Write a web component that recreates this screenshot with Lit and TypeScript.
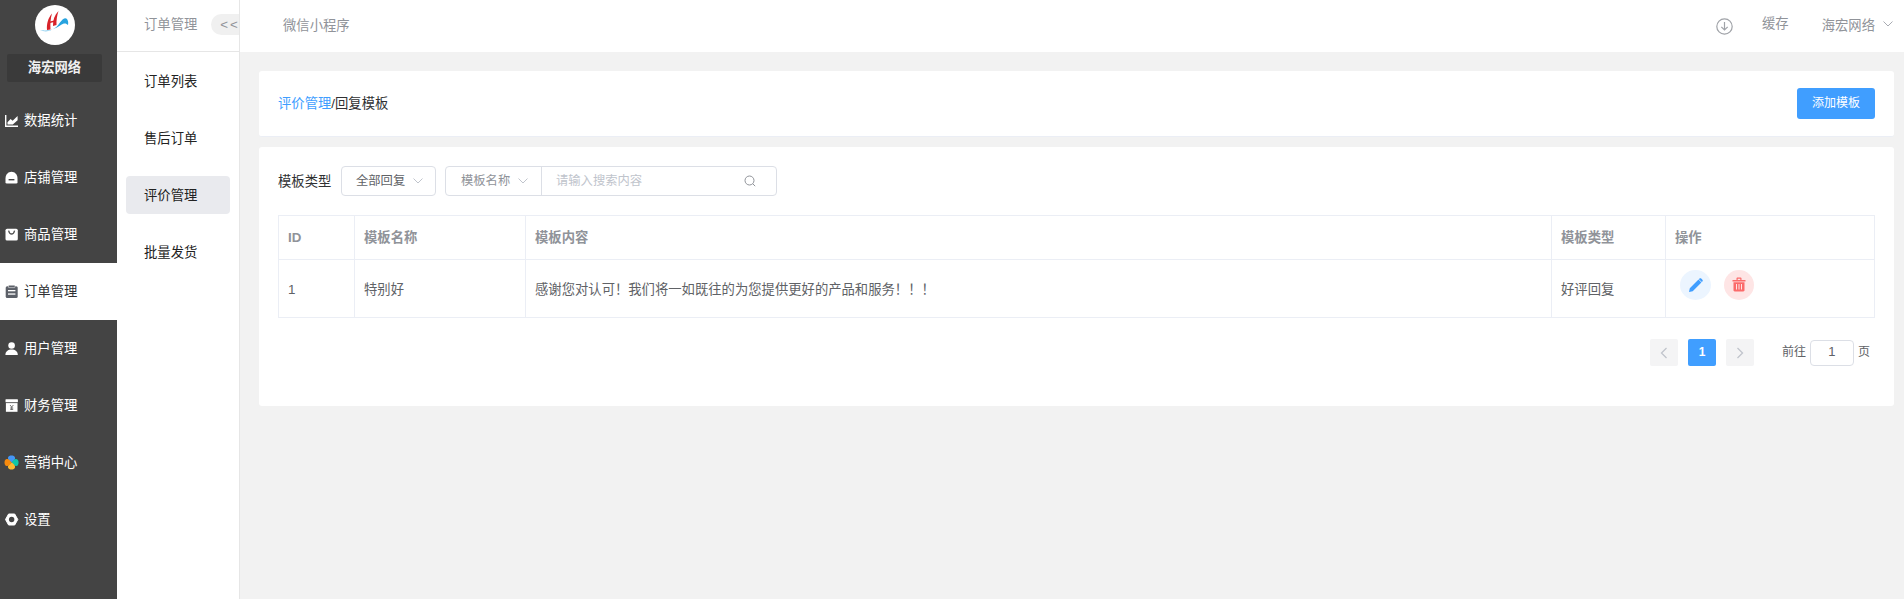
import { LitElement, html, css, svg } from "lit";
import { customElement } from "lit/decorators.js";

const petal = "M6.500 6.500C4.500 5.300 3 3.700 3.200 2.100 3.400 .5 5 0 6.500 0s3.100.5 3.300 2.100C10 3.700 8.500 5.300 6.500 6.500z";

const icons: Record<string, unknown> = {
  chart: svg`<path d="M.7 1v11.300H13" fill="none" stroke="#fff" stroke-width="1.400"/><path d="M2.500 10.500V8.200L5.600 5l2 1.800L12.600 2v4.200L7.800 10.500z" fill="#fff"/>`,
  store: svg`<path d="M.5 11.200V7.400C.5 3.600 3.200 .8 6.500 .8s6 2.800 6 6.600v3.800a1.300 1.300 0 0 1-1.300 1.300H1.800A1.300 1.300 0 0 1 .5 11.200z" fill="#fff"/><rect x="3.600" y="8" width="5.800" height="1.400" fill="#444"/>`,
  goods: svg`<rect x=".5" y=".7" width="12.300" height="11.800" rx="1.600" fill="#fff"/><path d="M3.600 2.600c.6 2.400 1.700 3.400 3 3.400s2.400-1 3-3.400" fill="none" stroke="#555" stroke-width="1.300"/>`,
  order: svg`<rect x=".7" y="1.300" width="12" height="11.700" rx="1.500" fill="#5c6068"/><rect x="3.400" y=".2" width="6.600" height="2.400" rx=".6" fill="#5c6068" stroke="#fff" stroke-width=".5"/><rect x="3" y="5" width="7.400" height="1.300" fill="#fff"/><rect x="3" y="8.400" width="7.400" height="1.300" fill="#fff"/>`,
  user: svg`<circle cx="6.600" cy="3.500" r="3.300" fill="#fff"/><path d="M.4 13c0-3.400 2.600-5.400 6.200-5.400s6.200 2 6.200 5.400z" fill="#fff"/>`,
  finance: svg`<rect x=".5" y=".3" width="12.400" height="3" rx=".5" fill="#fff"/><rect x=".9" y="4.100" width="11.600" height="8.700" fill="#fff"/><path d="M5 6l1.700 2L8.400 6M6.700 8v3M5.200 9h3M5.200 10.400h3" fill="none" stroke="#666" stroke-width=".9"/>`,
  market: svg`<g transform="translate(-.5 -.5) scale(1.080)"><path d="${petal}" fill="#4596f5"/><path d="${petal}" fill="#12c7a8" transform="rotate(90 6.500 6.500)"/><path d="${petal}" fill="#fdb931" transform="rotate(180 6.500 6.500)"/><path d="${petal}" fill="#f78a0d" transform="rotate(270 6.500 6.500)"/></g>`,
  gear: svg`<path d="M3.600 1h6.100l3.100 5.500-3.100 5.500H3.600L.5 6.500z" fill="#fff" stroke="#fff" stroke-linejoin="round"/><circle cx="6.650" cy="6.500" r="2.700" fill="#444"/>`,
};

const menu = [
  ["chart", "数据统计"], ["store", "店铺管理"], ["goods", "商品管理"], ["order", "订单管理"],
  ["user", "用户管理"], ["finance", "财务管理"], ["market", "营销中心"], ["gear", "设置"],
];
const subMenu = ["订单列表", "售后订单", "评价管理", "批量发货"];

const chevron = html`<svg class="chev" viewBox="0 0 10 6" width="10" height="6"><path d="M.5.5 5 5 9.500.5" fill="none" stroke="currentColor" stroke-width="1"/></svg>`;

@customElement("app-root")
export class AppRoot extends LitElement {
  static styles = css`
    :host { display: flex; height: 599px; overflow: hidden; background: #f2f2f2; font: 13.330px/1.400 "Liberation Sans", "Noto Sans CJK SC", sans-serif; color: #303133; }
    * { box-sizing: border-box; }
    .side { width: 117px; flex: none; background: #444; color: #fff; display: flex; flex-direction: column; }
    .logo { width: 40px; height: 40px; margin: 5px 0 9px 35px; display: block; }
    .brand { margin: 0 15px 10px 7px; height: 28px; background: #3a3a3a; border-radius: 2px; font-weight: 700; display: flex; align-items: center; justify-content: center; color: #f0f0f0; }
    .mi { height: 57px; display: flex; align-items: center; gap: 6px; padding-left: 5px; padding-top: 1px; }
    .mi svg { width: 13px; height: 13px; flex: none; overflow: visible; margin-top: -1px; }
    .mi.on { background: #fff; color: #303133; }
    .sub { width: 123px; flex: none; background: #fff; border-right: 1px solid #e6e6e6; overflow: hidden; }
    .subhead { height: 52px; border-bottom: 1px solid #e6e6e6; display: flex; align-items: center; padding-left: 27px; color: #909399; white-space: nowrap; }
    .toggle { margin-left: 14px; flex: none; width: 40px; height: 21px; padding-left: 9px; margin-top: -2px; border-radius: 11px; background: #f0f0f0; color: #909399; letter-spacing: 2px; line-height: 21px; }
    .sublist { padding: 10px 9px 0; }
    .si { height: 38px; margin-bottom: 19px; padding: 2px 0 0 18px; display: flex; align-items: center; border-radius: 4px; color: #222; width: 104px; }
    .si.on { background: #e9eaee; }
    .main { flex: 1; min-width: 0; display: flex; flex-direction: column; }
    .top { height: 52px; flex: none; background: #fff; display: flex; align-items: center; padding: 0 11px 0 43px; color: #909399; }
    .top .dl { margin-left: auto; width: 17px; height: 17px; margin-right: 29px; }
    .top .cache { margin-top: -3px; margin-right: 33px; }
    .top .user { margin-top: 1px; margin-right: 8px; }
    .top .chev { margin-top: -4px; color: #a8abb2; }
    .body { padding: 19px 10px 0 19px; display: flex; flex-direction: column; gap: 10px; }
    .card { background: #fff; border-radius: 3px; }
    .head { height: 66px; padding: 0 19px; border-bottom: 1px solid #ebeef5; display: flex; align-items: center; justify-content: space-between; }
    .crumb { padding-top: 1px; }
    .crumb a { color: #409eff; }
    .btn { width: 78px; height: 31px; border-radius: 3px; background: #409eff; color: #fff; font-size: 12px; display: flex; align-items: center; justify-content: center; }
    .panel { padding: 19px 19px 40px; }
    .filter { display: flex; align-items: center; height: 30px; margin-bottom: 19px; }
    .filter span { padding-top: 2px; }
    .filter .lab { width: 63px; }
    .sel { height: 30px; border: 1px solid #dcdfe6; border-radius: 4px; display: flex; align-items: center; font-size: 12.300px; color: #606266; }
    .sel.a { width: 95px; padding-left: 14px; gap: 8px; margin-right: 9px; }
    .sel .chev { color: #c0c4cc; }
    .grp { width: 332px; height: 30px; border: 1px solid #dcdfe6; border-radius: 4px; display: flex; align-items: center; font-size: 12.300px; }
    .grp .l { width: 96px; height: 100%; flex: none; border-right: 1px solid #dcdfe6; padding-left: 15px; gap: 8px; display: flex; align-items: center; color: #909399; }
    .grp .l .chev { color: #c0c4cc; }
    .grp .ph { flex: 1; padding-left: 14px; color: #c0c4cc; }
    .grp svg.s { margin-right: 20px; }
    table { width: 1596px; border-collapse: collapse; table-layout: fixed; }
    th, td { border: 1px solid #ebeef5; padding: 0 9px; text-align: left; }
    th { height: 44px; color: #909399; font-weight: 700; padding-top: 2px; }
    td { height: 58px; color: #606266; padding-top: 3px; }
    .ops { display: flex; gap: 13px; padding: 0 0 11px 5px; }
    .op { width: 31px; height: 30px; border-radius: 50%; display: flex; align-items: center; justify-content: center; }
    .op.e { background: #ecf5ff; }
    .op.d { background: #fee5e5; width: 30px; }
    .pager { display: flex; align-items: center; justify-content: flex-end; margin-top: 21px; height: 27px; font-size: 12px; color: #606266; }
    .pg { width: 28px; height: 27px; border-radius: 2px; background: #f4f4f5; color: #c0c4cc; display: flex; align-items: center; justify-content: center; margin-right: 10px; }
    .pg.on { background: #409eff; color: #fff; font-weight: 700; }
    .pg.last { margin-right: 28px; }
    .inp { width: 44px; height: 26px; margin: 0 4px; border: 1px solid #dcdfe6; border-radius: 4px; display: flex; align-items: center; justify-content: center; font-size: 13px; }
    .pager .end { margin-right: 5px; }
  `;

  render() {
    return html`
      <aside class="side">
        <svg class="logo" viewBox="0 0 40 40">
          <circle cx="20" cy="20" r="20" fill="#fff"/>
          <path d="M12 25c-.5-6 1-12 5-16.500-1.500 5-1.800 10-1.500 16zM18 21c-.2-6 1.500-11 5.500-15-1.500 4.500-2.200 9.500-2 14z" fill="#d8232a"/>
          <path d="M15 16.500l6-1.500v1.500l-6 1.500z" fill="#d8232a"/>
          <path d="M5 25c5.500 2.200 10.500 1.200 15-2s6.500-9.500 10-9.800c2.500-.2 3.800 3.300 3 6.800-2-2.300-4.500-2-7.500.2-6 4.400-14.500 7-20.500 4.800z" fill="#27a3df"/>
        </svg>
        <div class="brand">海宏网络</div>
        ${menu.map(([icon, label]) => html`
          <div class="mi ${label === "订单管理" ? "on" : ""}">
            <svg viewBox="0 0 13 13">${icons[icon]}</svg><span>${label}</span>
          </div>`)}
      </aside>
      <nav class="sub">
        <div class="subhead"><span>订单管理</span><span class="toggle">&lt;&lt;</span></div>
        <div class="sublist">
          ${subMenu.map((s) => html`<div class="si ${s === "评价管理" ? "on" : ""}">${s}</div>`)}
        </div>
      </nav>
      <div class="main">
        <header class="top">
          <span>微信小程序</span>
          <svg class="dl" viewBox="0 0 17 17"><circle cx="8.500" cy="8.500" r="7.700" fill="none" stroke="#a0a3a8" stroke-width="1.200"/><path d="M8.500 4v8M5.300 8.800l3.200 3.200 3.200-3.200" fill="none" stroke="#a0a3a8" stroke-width="1.200"/></svg>
          <span class="cache">缓存</span>
          <span class="user">海宏网络</span>
          ${chevron}
        </header>
        <div class="body">
          <section class="card head">
            <div class="crumb"><a>评价管理</a>/回复模板</div>
            <div class="btn">添加模板</div>
          </section>
          <section class="card panel">
            <div class="filter">
              <span class="lab">模板类型</span>
              <div class="sel a"><span>全部回复</span>${chevron}</div>
              <div class="grp">
                <div class="l"><span>模板名称</span>${chevron}</div>
                <span class="ph">请输入搜索内容</span>
                <svg class="s" width="12" height="12" viewBox="0 0 12 12"><circle cx="5.500" cy="5.500" r="4.500" fill="none" stroke="#909399"/><path d="M8.800 8.800l2.400 2.400" stroke="#909399"/></svg>
              </div>
            </div>
            <table>
              <colgroup><col style="width:76px"><col style="width:171px"><col style="width:1026px"><col style="width:114px"><col style="width:209px"></colgroup>
              <thead><tr><th>ID</th><th>模板名称</th><th>模板内容</th><th>模板类型</th><th>操作</th></tr></thead>
              <tbody><tr>
                <td>1</td><td>特别好</td><td>感谢您对认可！我们将一如既往的为您提供更好的产品和服务！！！</td><td>好评回复</td>
                <td><div class="ops">
                  <div class="op e"><svg width="16" height="16" viewBox="0 0 16 16"><path d="M1 15l.8-3.700L10.500 2.600l2.900 2.900L4.700 14.200zM11.500 1.600c.5-.5 1.200-.5 1.700 0l1.200 1.200c.5.500.5 1.200 0 1.700l-.6.600-2.900-2.900z" fill="#409eff"/></svg></div>
                  <div class="op d"><svg width="14" height="15" viewBox="0 0 14 15"><path d="M.5 3h13v1.500H.5zM4.500 3V1.200C4.500.7 5 .5 5.400.5h3.200c.5 0 .9.200.9.700V3H8.300V1.700H5.700V3z" fill="#fb6b6b"/><path d="M1.500 5.300h11v8c0 .7-.5 1.200-1.200 1.200H2.700c-.7 0-1.200-.5-1.200-1.200z" fill="#fb6b6b"/><path d="M4.500 7v5.500M7 7v5.500M9.500 7v5.500" stroke="#fee5e5" stroke-width="1"/></svg></div>
                </div></td>
              </tr></tbody>
            </table>
            <div class="pager">
              <div class="pg"><svg width="8" height="12" viewBox="0 0 8 12"><path d="M6.500 1 1.500 6l5 5" fill="none" stroke="currentColor" stroke-width="1.300"/></svg></div>
              <div class="pg on">1</div>
              <div class="pg last"><svg width="8" height="12" viewBox="0 0 8 12"><path d="M1.500 1l5 5-5 5" fill="none" stroke="currentColor" stroke-width="1.300"/></svg></div>
              <span>前往</span><div class="inp">1</div><span class="end">页</span>
            </div>
          </section>
        </div>
      </div>
    `;
  }
}
